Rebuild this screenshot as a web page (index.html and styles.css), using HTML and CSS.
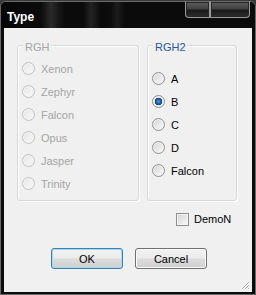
FILE: index.html
```html
<!DOCTYPE html>
<html lang="en">
<head>
    <meta charset="UTF-8">
    <title>Type</title>
    <link rel="stylesheet" href="styles.css">
</head>
<body>
    <div class="window">
        <div class="titlebar">
            <span class="title">Type</span>
            <div class="caption-btns">
                <span class="cap-btn cap-help"></span>
                <span class="cap-btn cap-close"></span>
            </div>
        </div>

        <div class="client">
            <div class="groups">
                <div class="group group-rgh disabled">
                    <div class="legend">RGH</div>
                    <ul class="radios">
                        <li><span class="radio"></span>Xenon</li>
                        <li><span class="radio"></span>Zephyr</li>
                        <li><span class="radio"></span>Falcon</li>
                        <li><span class="radio"></span>Opus</li>
                        <li><span class="radio"></span>Jasper</li>
                        <li><span class="radio"></span>Trinity</li>
                    </ul>
                </div>
                <div class="group group-rgh2">
                    <div class="legend">RGH2</div>
                    <ul class="radios">
                        <li><span class="radio"></span>A</li>
                        <li><span class="radio checked"></span>B</li>
                        <li><span class="radio"></span>C</li>
                        <li><span class="radio"></span>D</li>
                        <li><span class="radio"></span>Falcon</li>
                    </ul>
                </div>
            </div>

            <label class="check"><span class="checkbox"></span>DemoN</label>

            <div class="buttons">
                <button class="btn btn-default">OK</button>
                <button class="btn">Cancel</button>
            </div>

            <svg class="grip" width="10" height="10" viewBox="0 0 10 10">
                <path d="M9 1L1 9M9 4L4 9M9 7L7 9" stroke="#fff" stroke-width="1"/>
                <path d="M8 1L1 8M8 4L4 8M8 7L7 8" stroke="#a8a8a8" stroke-width="1"/>
            </svg>
        </div>
    </div>
</body>
</html>
```

FILE: styles.css
```css
body {
    margin: 0;
    background: #3a3a3a;
    font-family: "Liberation Sans", Arial, sans-serif;
    font-size: 11px;
    color: #000;
}
.window {
    margin-top: 1px;
    height: 294px;
    box-sizing: border-box;
    border: 1px solid #6a6a6a;
    border-radius: 6px 6px 0 0;
    background: #0b0b0b;
    padding-bottom: 2px;
    display: flex;
    flex-direction: column;
}
.titlebar {
    height: 26px;
    flex-shrink: 0;
    display: flex;
    justify-content: space-between;
    align-items: flex-start;
    border-radius: 5px 5px 0 0;
    background: linear-gradient(90deg, #060606 0, #0b0b0b 40px, #2a2a2a 50px, #161616 58px, #0b0b0b 64px, #0b0b0b 82px, #232323 90px, #0b0b0b 100px, #0d0d0d 110px, #1c1c1c 116px, #0b0b0b 124px, #0b0b0b);
}
.title {
    color: #fff;
    font-weight: bold;
    font-size: 12px;
    line-height: 14px;
    padding: 8px 0 0 6px;
}
.caption-btns {
    display: flex;
    margin: -1px 5px 0 0;
}
.cap-btn {
    height: 17px;
    box-sizing: border-box;
    border: 1px solid #9a9a9a;
    border-top-color: #6a6a6a;
    box-shadow: inset 0 0 0 1px #262626;
    background: linear-gradient(#5e5e5e 0, #424242 45%, #1a1a1a 55%, #2c2c2c 100%);
}
.cap-help {
    width: 25px;
    border-radius: 0 0 0 4px;
}
.cap-close {
    width: 40px;
    border-radius: 0 0 4px 0;
}
.client {
    position: relative;
    flex: 1;
    margin: 0 3px;
    background: #f0f0f0;
    padding: 17px 0 0 13px;
    display: flex;
    flex-direction: column;
    align-items: flex-start;
}
.groups {
    display: flex;
    gap: 8px;
}
.group {
    box-sizing: border-box;
    height: 156px;
    border: 1px solid #d5d9dc;
    border-radius: 3px;
    box-shadow: inset 1px 1px #fff, 1px 1px #fff;
    padding: 0 4px;
    display: flex;
    flex-direction: column;
}
.group-rgh {
    width: 122px;
}
.group-rgh2 {
    width: 90px;
}
.legend {
    align-self: flex-start;
    margin: -5px 0 0 1px;
    padding: 0 2px;
    line-height: 13px;
    background: #f0f0f0;
    color: #2a56a6;
}
.radios {
    list-style: none;
    margin: 0;
    padding: 3px 0 0;
}
.group-rgh2 .radios {
    padding-top: 13px;
}
.radios li {
    height: 23px;
    display: flex;
    align-items: center;
}
.radio {
    width: 13px;
    height: 13px;
    box-sizing: border-box;
    border-radius: 50%;
    margin-right: 6px;
    border: 1px solid #8e8f8f;
    background: linear-gradient(135deg, #cdd0d3 0, #e8e8e8 50%, #fafafa 100%);
    box-shadow: inset 0 0 0 1px #f4f4f4;
}
.radio.checked {
    background: radial-gradient(circle, #5aa2e0 0, #2466ac 2px, #0f3d78 3.5px, #e4e4e4 4px, #f6f6f6 100%);
}
.disabled .legend,
.disabled .radios li {
    color: #a4a4a4;
}
.disabled .radio {
    border-color: #c2c2c2;
    background: linear-gradient(135deg, #e4e4e4 0, #f0f0f0 50%, #f8f8f8 100%);
}
.check {
    display: flex;
    align-items: center;
    gap: 5px;
    margin: 12px 0 0 159px;
    line-height: 13px;
}
.checkbox {
    width: 13px;
    height: 13px;
    box-sizing: border-box;
    border: 1px solid #8e8f8f;
    background: linear-gradient(135deg, #cdd0d3 0, #e6e6e6 50%, #f8f8f8 100%);
    box-shadow: inset 0 0 0 1px #f4f4f4;
}
.buttons {
    display: flex;
    gap: 12px;
    margin: 22px 0 0 34px;
}
.btn {
    width: 72px;
    height: 21px;
    box-sizing: border-box;
    padding: 0;
    border: 1px solid #707070;
    border-radius: 3px;
    background: linear-gradient(#f2f2f2 0, #ebebeb 48%, #dddddd 52%, #cfcfcf 100%);
    box-shadow: inset 0 0 0 1px #fbfbfb;
    font-family: "Liberation Sans", Arial, sans-serif;
    font-size: 11px;
    color: #000;
}
.btn-default {
    border-color: #3c7fb1;
    box-shadow: inset 0 0 0 1px #9fdcf6;
}
.grip {
    position: absolute;
    right: 1px;
    bottom: 1px;
}
```
